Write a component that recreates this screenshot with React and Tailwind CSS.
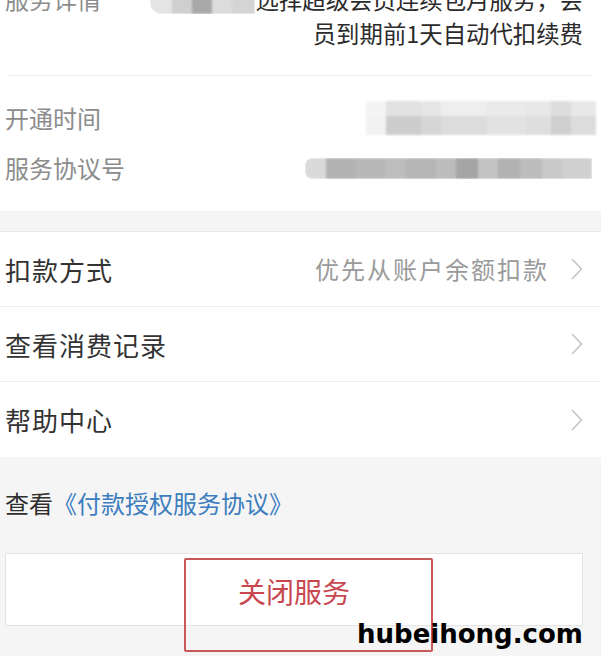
import React from "react";

function Chevron() {
  return (
    <svg width="12" height="22" viewBox="0 0 12 22" fill="none" className="shrink-0">
      <path d="M1.5 1.5 L10.5 11 L1.5 20.5" stroke="#c4c4c4" strokeWidth="1.6" strokeLinecap="round" strokeLinejoin="round" />
    </svg>
  );
}

function Cells({ cells, className }) {
  return (
    <div className={"flex blur-[1.2px] " + className}>
      {cells.map((c, i) => (
        <div key={i} style={{ width: c[0], background: c[1] }} className="h-full" />
      ))}
    </div>
  );
}

export default function App() {
  const font = { fontFamily: '"Noto Sans CJK SC", "Noto Sans", sans-serif' };
  return (
    <div className="w-[601px] h-[656px] overflow-hidden bg-[#f5f5f5] relative" style={font}>
      {/* top white card */}
      <section className="bg-white h-[211px] overflow-hidden">
        <div className="flex items-start -mt-[18px] pl-[5px] pr-[18px]">
          <span className="text-[24px] leading-[34px] text-[#8c8c8c] shrink-0">服务详情</span>
          <div className="ml-[49px] mt-[8px] h-[24px] w-[105px] rounded-l-[12px] overflow-hidden shrink-0">
            <Cells
              className="h-full"
              cells={[[22, "#e4e4e4"], [20, "#cfcfcf"], [20, "#a9a9a9"], [20, "#dcdcdc"], [23, "#d4d4d4"]]}
            />
          </div>
          <p className="ml-auto text-right text-[23.4px] leading-[34px] text-[#2b2b2b] whitespace-nowrap">
            选择超级会员连续包月服务，会
            <br />
            员到期前1天自动代扣续费
          </p>
        </div>
        <div className="mt-[25px] mx-[8px] h-px bg-[#f0f0f0]" />
        <div className="mt-[25px] flex items-center justify-between pl-[5px] pr-[5px] h-[34px]">
          <span className="text-[24px] text-[#8c8c8c]">开通时间</span>
          <div className="w-[230px] h-[34px] flex flex-col blur-[1.2px]">
            <div className="flex h-[15px]">
              <div className="w-[20px] bg-[#f4f4f4]" />
              <div className="w-[35px] bg-[#e2e2e2]" />
              <div className="w-[20px] bg-[#e6e6e6]" />
              <div className="w-[45px] bg-[#eeeeee]" />
              <div className="w-[40px] bg-[#eaeaea]" />
              <div className="w-[25px] bg-[#e8e8e8]" />
              <div className="w-[20px] bg-[#dddddd]" />
              <div className="w-[25px] bg-[#e8e8e8]" />
            </div>
            <div className="flex h-[19px]">
              <div className="w-[20px] bg-[#f2f2f2]" />
              <div className="w-[35px] bg-[#cdcdcd]" />
              <div className="w-[20px] bg-[#d6d6d6]" />
              <div className="w-[45px] bg-[#dcdcdc]" />
              <div className="w-[40px] bg-[#e2e2e2]" />
              <div className="w-[25px] bg-[#dedede]" />
              <div className="w-[20px] bg-[#cfcfcf]" />
              <div className="w-[25px] bg-[#dcdcdc]" />
            </div>
          </div>
        </div>
        <div className="mt-[16px] flex items-center justify-between pl-[5px] pr-[9px] h-[34px]">
          <span className="text-[24px] text-[#8c8c8c]">服务协议号</span>
          <div className="w-[287px] h-[21px] rounded-l-[8px] overflow-hidden">
            <Cells
              className="h-full"
              cells={[
                [21, "#dadada"], [30, "#b3b3b3"], [30, "#b8b8b8"], [20, "#bdbdbd"], [30, "#b5b5b5"],
                [20, "#bcbcbc"], [22, "#a5a5a5"], [20, "#c2c2c2"], [22, "#b2b2b2"], [22, "#bcbcbc"],
                [20, "#c9c9c9"], [30, "#d0d0d0"],
              ]}
            />
          </div>
        </div>
      </section>

      {/* list rows */}
      <section className="mt-[20px] bg-white border-t border-[#e8e8e8]">
        <div className="h-[75px] flex items-center pl-[5px] pr-[18px] border-b border-[#efefef]">
          <span className="text-[26px] tracking-[1px] text-[#333333]">扣款方式</span>
          <span className="ml-auto text-[24px] tracking-[2px] text-[#9a9a9a] mr-[22px]">优先从账户余额扣款</span>
          <Chevron />
        </div>
        <div className="h-[75px] flex items-center pl-[5px] pr-[18px] border-b border-[#efefef]">
          <span className="text-[26px] tracking-[1px] text-[#333333]">查看消费记录</span>
          <span className="ml-auto" />
          <Chevron />
        </div>
        <div className="h-[75px] flex items-center pl-[5px] pr-[18px]">
          <span className="text-[26px] tracking-[1px] text-[#333333]">帮助中心</span>
          <span className="ml-auto" />
          <Chevron />
        </div>
      </section>

      <div className="pt-[30px] pl-[5px] h-[62px]">
        <p className="text-[24px] leading-[32px] text-[#2e2e2e]">
          查看<span className="text-[#3b7dbf]">《付款授权服务协议》</span>
        </p>
      </div>

      <div className="mt-[34px] ml-[5px] mr-[18px] h-[73px] bg-white border border-[#e4e4e4] flex items-center justify-center">
        <span className="text-[28px] text-[#c8474f] mt-[2px]">关闭服务</span>
      </div>

      {/* annotation overlay */}
      <div className="absolute left-[184px] top-[558px] w-[249px] h-[94px] border-2 border-[#c9585a] rounded-[2px]" />
      <div
        className="absolute left-[357px] top-[619px] text-[26px] leading-[30px] font-black text-black"
        style={{ fontFamily: '"DejaVu Sans", sans-serif' }}
      >
        hubeihong.com
      </div>
    </div>
  );
}
